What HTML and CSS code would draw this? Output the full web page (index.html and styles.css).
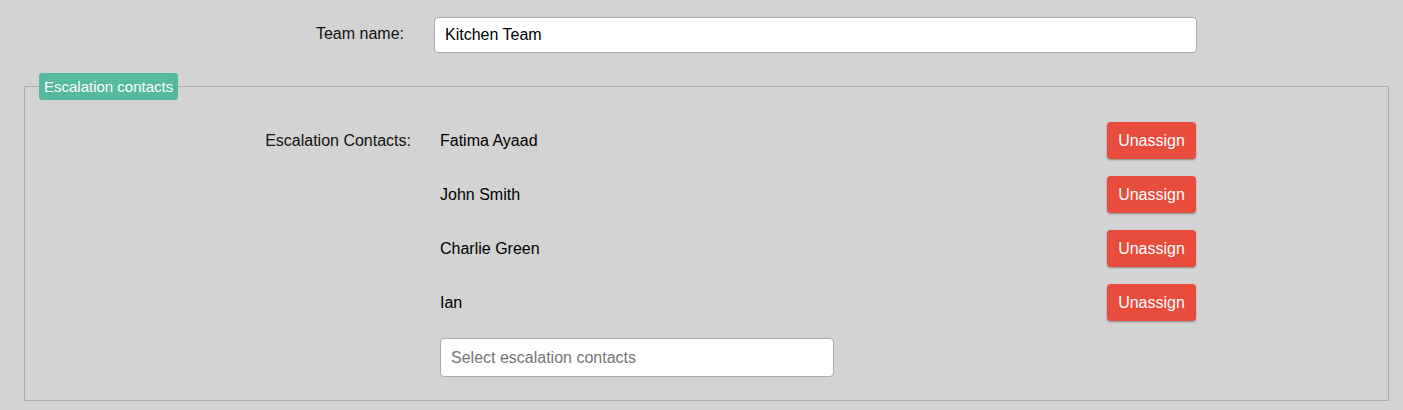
FILE: index.html
```html
<!DOCTYPE html>
<html lang="en">
<head>
<meta charset="utf-8">
<title>Team</title>
<link rel="stylesheet" href="styles.css">
</head>
<body>
<div class="page">
  <div class="team-row">
    <label class="team-label" for="team">Team name:</label>
    <input id="team" class="text-input team-input" type="text" value="Kitchen Team">
  </div>
  <fieldset class="group">
    <legend class="group-legend">Escalation contacts</legend>
    <div class="contacts">
      <div class="contacts-label">Escalation Contacts:</div>
      <div class="contact-list">
        <div class="contact-row"><span class="contact-name">Fatima Ayaad</span><button class="unassign" type="button">Unassign</button></div>
        <div class="contact-row"><span class="contact-name">John Smith</span><button class="unassign" type="button">Unassign</button></div>
        <div class="contact-row"><span class="contact-name">Charlie Green</span><button class="unassign" type="button">Unassign</button></div>
        <div class="contact-row"><span class="contact-name">Ian</span><button class="unassign" type="button">Unassign</button></div>
        <input class="text-input select-input" type="text" placeholder="Select escalation contacts">
      </div>
    </div>
  </fieldset>
</div>
</body>
</html>
```
FILE: styles.css
```css
* { box-sizing: border-box; }
html, body {
  margin: 0;
  padding: 0;
  background: #d3d3d3;
}
body {
  font-family: "Liberation Sans", Arial, sans-serif;
  font-size: 16px;
  color: #111;
}
.page {
  padding: 17px 14px 0 24px;
}
.team-row {
  display: grid;
  grid-template-columns: 380px 763px;
  column-gap: 30px;
  align-items: center;
}
.team-label {
  text-align: right;
  padding-bottom: 2px;
}
.text-input {
  font-family: "Liberation Sans", Arial, sans-serif;
  font-size: 16px;
  color: #000;
  background: #fff;
  border: 1px solid #a9a9a9;
  border-radius: 4px;
  padding: 0 10px;
  margin: 0;
  outline: none;
}
.team-input {
  height: 36px;
}
.select-input {
  width: 394px;
  height: 39px;
}
.select-input::placeholder {
  color: #757575;
}
.group {
  margin: 20px 0 0 0;
  border: 1px solid #a9aeb3;
  padding: 22px 14px 23px 14px;
  min-width: 0;
}
.group-legend {
  background: #55b9a0;
  color: #fff;
  font-size: 15px;
  line-height: 27px;
  height: 27px;
  padding: 0 5px;
  border-radius: 3px;
}
.contacts {
  display: grid;
  grid-template-columns: 372px 757px;
  column-gap: 29px;
  align-items: start;
}
.contacts-label {
  text-align: right;
  line-height: 37px;
}
.contact-list {
  display: flex;
  flex-direction: column;
  align-items: flex-start;
  gap: 17px;
}
.contact-row {
  display: flex;
  align-items: center;
  justify-content: space-between;
  width: 100%;
  padding-right: 1px;
}
.contact-name {
  color: #000;
}
.unassign {
  font-family: "Liberation Sans", Arial, sans-serif;
  font-size: 16px;
  color: #fff;
  background: #e74c3c;
  border: none;
  border-radius: 4px;
  height: 37px;
  width: 89px;
  padding: 0;
  box-shadow: 0 1px 2px rgba(0, 0, 0, 0.35);
}
```
